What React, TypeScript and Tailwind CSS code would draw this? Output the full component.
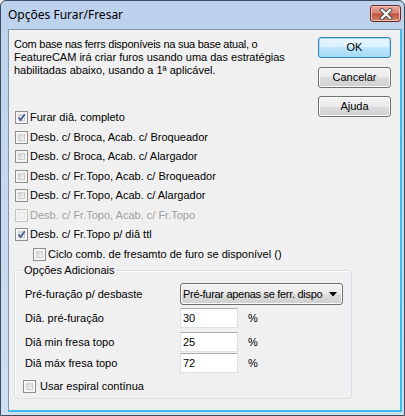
import React from "react";

const font = "font-['Liberation_Sans',Arial,sans-serif] text-[11px] leading-[13px] text-black";

function CheckBox({ checked = false, disabled = false }: { checked?: boolean; disabled?: boolean }) {
  return (
    <span
      className={
        "relative block h-[13px] w-[13px] shrink-0 border p-[2px] " +
        (disabled ? "border-[#c4c4c4] bg-[#f4f4f4]" : "border-[#8e8f8f] bg-[#f4f4f4]")
      }
    >
      <span
        className={
          "block h-full w-full " +
          (disabled
            ? "bg-[#f4f4f4] border border-[#e4e4e4]"
            : "bg-gradient-to-br from-[#cdd0d4] to-[#f7f7f7] border border-[#b3b6ba]/40")
        }
      />
      {checked && (
        <svg className="absolute left-0 top-0" width="11" height="11" viewBox="0 0 11 11">
          <path d="M2.5 5.5 L4.6 8 L8.8 2.2" fill="none" stroke="#4a5f97" strokeWidth="1.8" />
        </svg>
      )}
    </span>
  );
}

function CheckRow({
  label,
  checked,
  disabled,
  className = "",
}: {
  label: string;
  checked?: boolean;
  disabled?: boolean;
  className?: string;
}) {
  return (
    <div className={"flex h-[19.5px] items-center gap-[2px] " + className}>
      <CheckBox checked={checked} disabled={disabled} />
      <span className={disabled ? "text-[#a0a0a0]" : ""}>{label}</span>
    </div>
  );
}

function WinButton({ label, primary = false }: { label: string; primary?: boolean }) {
  return (
    <div
      className={
        "flex h-[21px] w-[73px] items-center justify-center rounded-[3px] border " +
        (primary
          ? "border-[#3c7fb1] bg-[linear-gradient(#eaf6fd,#d9f0fc_50%,#bee6fd_50%,#a7d9f5)] shadow-[inset_0_0_0_1px_#9be0fa]"
          : "border-[#707070] bg-[linear-gradient(#f2f2f2,#ebebeb_50%,#dddddd_50%,#cfcfcf)] shadow-[inset_0_0_0_1px_#fcfcfc]")
      }
    >
      {label}
    </div>
  );
}

function TextBox({ value }: { value: string }) {
  return (
    <div className="flex h-[20px] w-[58px] items-center border border-[#dbdfe6] border-t-[#abadb3] bg-white pl-[2px]">
      {value}
    </div>
  );
}

function NumberRow({ label, value, className = "" }: { label: string; value: string; className?: string }) {
  return (
    <div className={"flex items-center " + className}>
      <span className="w-[155px]">{label}</span>
      <TextBox value={value} />
      <span className="ml-[10px]">%</span>
    </div>
  );
}

export default function App() {
  return (
    <div className={"h-[416px] w-[405px] overflow-hidden bg-[#f0f0f0] " + font}>
      <div className="flex h-full flex-col rounded-t-[6px] border border-[#3d4b5c] bg-gradient-to-b from-[#bcd2ec] to-[#cfdff2]">
        {/* title bar */}
        <div className="flex h-[28px] shrink-0 items-start justify-between pl-[7px] pr-[3px]">
          <span className="mt-[6px] font-['Noto_Sans',sans-serif] text-[12px] leading-[16px] text-black">
            Opções Furar/Fresar
          </span>
          <div className="mt-[4px] flex h-[17px] w-[31px] items-center justify-center rounded-[3px] border border-[#6b2b24] bg-[linear-gradient(#e9a99b,#d88471_45%,#c2523e_55%,#d6876d)] shadow-[inset_0_0_0_1px_#f0bfb3]">
            <svg width="14" height="12" viewBox="0 0 14 12">
              <path d="M3 2 L11 10 M11 2 L3 10" stroke="#4a4a4a" strokeWidth="4" strokeLinecap="square" />
              <path d="M3 2 L11 10 M11 2 L3 10" stroke="#ffffff" strokeWidth="2.2" strokeLinecap="square" />
            </svg>
          </div>
        </div>

        {/* client area */}
        <div className="mb-[3px] ml-[7px] mr-[2px] flex-1 border-l border-t border-[#8096b2] border-b-2 border-r-2 border-b-[#3fbcee] border-r-[#3fbcee] bg-[#f0f0f0]">
          <div className="flex justify-between">
            <div className="pl-[5px] pt-[8px]">
              <p className="whitespace-nowrap">
                <span className="tracking-[-0.25px]">Com base nas ferrs disponíveis na sua base atual, o</span>
                <br />
                FeatureCAM irá criar furos usando uma das estratégias
                <br />
                habilitadas abaixo, usando a 1ª aplicável.
              </p>
              <div className="mt-[31px] pl-[1px]">
                <CheckRow label="Furar diâ. completo" checked />
                <CheckRow label="Desb. c/ Broca, Acab. c/ Broqueador" />
                <CheckRow label="Desb. c/ Broca, Acab. c/ Alargador" />
                <CheckRow label="Desb. c/ Fr.Topo, Acab. c/ Broqueador" />
                <CheckRow label="Desb. c/ Fr.Topo, Acab. c/ Alargador" />
                <CheckRow label="Desb. c/ Fr.Topo, Acab. c/ Fr.Topo" disabled />
                <CheckRow label="Desb. c/ Fr.Topo p/ diâ ttl" checked />
                <CheckRow label="Ciclo comb. de fresamto de furo se disponível ()" className="pl-[18px]" />
              </div>
            </div>
            <div className="flex flex-col gap-[8.5px] pr-[9px] pt-[7px]">
              <WinButton label="OK" primary />
              <WinButton label="Cancelar" />
              <WinButton label="Ajuda" />
            </div>
          </div>

          {/* group box */}
          <div className="ml-[5px] mt-[6px] w-[338px] rounded-[3px] border border-[#d5dfe5] pb-[5px] pl-[10px] shadow-[inset_1px_1px_0_#ffffff]">
            <span className="-mt-[7px] ml-[-2px] block w-fit bg-[#f0f0f0] px-[1px]">Opções Adicionais</span>
            <div className="mt-[6px] flex items-center">
              <span className="w-[155px]">Pré-furação p/ desbaste</span>
              <div className="flex h-[22px] w-[163px] items-center rounded-[3px] border border-[#707070] bg-[linear-gradient(#f2f2f2,#ebebeb_50%,#dddddd_50%,#cfcfcf)] shadow-[inset_0_0_0_1px_#fcfcfc]">
                <span className="w-[148px] whitespace-nowrap pl-[2px] tracking-[-0.3px]">
                  Pré-furar apenas se ferr. dispo
                </span>
                <svg width="8" height="5" viewBox="0 0 8 5">
                  <path d="M0 0 H8 L4 4.5 Z" fill="#000" />
                </svg>
              </div>
            </div>
            <NumberRow label="Diâ. pré-furação" value="30" className="mt-[3px]" />
            <NumberRow label="Diâ min fresa topo" value="25" className="mt-[4px]" />
            <NumberRow label="Diâ máx fresa topo" value="72" className="mt-[1px]" />
            <div className="mt-[7px] flex items-center gap-[4px]">
              <span className="-ml-[2px]">
                <CheckBox />
              </span>
              <span>Usar espiral contínua</span>
            </div>
          </div>
        </div>
      </div>
    </div>
  );
}
